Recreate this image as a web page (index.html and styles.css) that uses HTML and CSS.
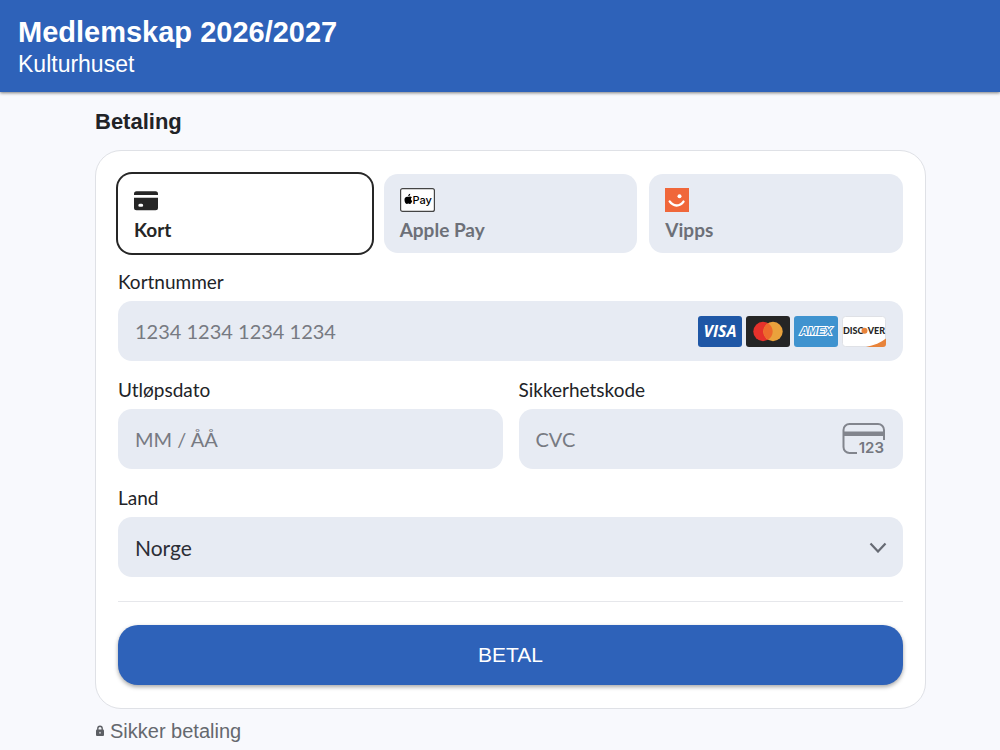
FILE: index.html
```html
<!DOCTYPE html>
<html lang="no">
<head>
  <meta charset="UTF-8">
  <meta name="viewport" content="width=device-width, initial-scale=1.0">
  <title>Medlemskap 2026/2027</title>
  <link rel="stylesheet" href="styles.css">
</head>
<body>
  <header class="topbar">
    <h1>Medlemskap 2026/2027</h1>
    <p>Kulturhuset</p>
  </header>

  <main class="checkout">
    <h2>Betaling</h2>

    <form class="card">
      <div class="methods">
        <button type="button" class="method selected" aria-pressed="true">
          <svg class="method-icon" width="24" height="24" viewBox="0 0 24 24" aria-hidden="true">
            <path fill="#262626" d="M2.500 3.300h19A2.500 2.500 0 0 1 24 5.800V7H0V5.800A2.500 2.500 0 0 1 2.500 3.300z"/>
            <path fill="#262626" fill-rule="evenodd" d="M0 9.800h24V19.700a2.500 2.500 0 0 1-2.500 2.500h-19A2.500 2.500 0 0 1 0 19.700zM5.800 15.700a1.500 1.500 0 0 0 0 3h1.900a1.500 1.500 0 0 0 0-3z"/>
          </svg>
          <span>Kort</span>
        </button>
        <button type="button" class="method" aria-pressed="false">
          <svg class="method-icon" width="35" height="24" viewBox="0 0 35 24" aria-hidden="true">
            <rect x="0.600" y="0.600" width="33.800" height="22.800" rx="2" fill="#fff" stroke="#444" stroke-width="1.200"/>
            <path d="M9 8.800c.8-.5 2.200-.5 2.900.5-1.500 1-1.200 3 .4 3.600-.6 1.600-1.500 3.100-2.500 3-.6-.1-.9-.4-1.500-.4s-.9.400-1.500.4C5.300 15.900 4.400 13.400 4.500 11.500c.1-2.200 1.900-3.200 3.300-2.700.5.200.8.200 1.200 0zM8.200 8.200c0-1.300.8-2.200 2-2.400.1 1.300-.8 2.400-2 2.400z"/>
            <text class="pay-text" x="12.500" y="15.500">Pay</text>
          </svg>
          <span>Apple Pay</span>
        </button>
        <button type="button" class="method" aria-pressed="false">
          <svg class="method-icon" width="24" height="24" viewBox="0 0 24 24" aria-hidden="true">
            <rect width="24" height="24" fill="#f0673a"/>
            <path d="M4.700 13.400c3.600 5.200 9.800 5.600 13.800.2" fill="none" stroke="#fff" stroke-width="2.400" stroke-linecap="round"/>
            <circle cx="14.500" cy="8.200" r="2" fill="#fff"/>
          </svg>
          <span>Vipps</span>
        </button>
      </div>

      <div class="field">
        <label for="number">Kortnummer</label>
        <div class="control">
          <input type="text" id="number" inputmode="numeric" placeholder="1234 1234 1234 1234">
          <div class="brands">
            <svg width="44" height="31" viewBox="0 0 44 31" role="img" aria-label="Visa">
              <rect width="44" height="31" rx="3" fill="#1f57a6"/>
              <text class="visa-text" x="22" y="21" text-anchor="middle">VISA</text>
            </svg>
            <svg width="44" height="31" viewBox="0 0 44 31" role="img" aria-label="Mastercard">
              <rect width="44" height="31" rx="3" fill="#252525"/>
              <circle cx="17" cy="15.500" r="9.700" fill="#e5312b"/>
              <circle cx="27" cy="15.500" r="9.700" fill="#eaa23c"/>
              <path d="M22 7.200a9.700 9.700 0 0 1 0 16.600 9.700 9.700 0 0 1 0-16.600z" fill="#ed6a2c"/>
            </svg>
            <svg width="44" height="31" viewBox="0 0 44 31" role="img" aria-label="American Express">
              <rect width="44" height="31" rx="3" fill="#3f93cf"/>
              <text class="amex-text" x="22" y="19" text-anchor="middle">AMEX</text>
            </svg>
            <svg width="44" height="31" viewBox="0 0 44 31" role="img" aria-label="Discover">
              <rect x="0.500" y="0.500" width="43" height="30" rx="3" fill="#fff" stroke="#dfe1e6"/>
              <path d="M24 31c8-1.500 15-4.500 20-8.500V28a3 3 0 0 1-3 3z" fill="#e8833a"/>
              <text class="discover-text" x="1" y="18">DISC</text>
              <text class="discover-text" x="43" y="18" text-anchor="end">VER</text>
              <circle cx="22.500" cy="14.800" r="3" fill="#e8833a"/>
            </svg>
          </div>
        </div>
      </div>

      <div class="row">
        <div class="field">
          <label for="expiry">Utløpsdato</label>
          <div class="control">
            <input type="text" id="expiry" inputmode="numeric" placeholder="MM / ÅÅ">
          </div>
        </div>
        <div class="field">
          <label for="cvc">Sikkerhetskode</label>
          <div class="control">
            <input type="text" id="cvc" inputmode="numeric" placeholder="CVC">
            <svg width="44" height="34" viewBox="0 0 44 34" aria-hidden="true">
              <path d="M15 31H7.500A6 6 0 0 1 1.500 25V8a6 6 0 0 1 6-6h28.500a6 6 0 0 1 6 6v10" fill="none" stroke="#82858d" stroke-width="2"/>
              <rect x="1.500" y="9.500" width="40.500" height="4.500" fill="#82858d"/>
              <text class="cvc-text" x="42" y="31" text-anchor="end">123</text>
            </svg>
          </div>
        </div>
      </div>

      <div class="field">
        <label for="country">Land</label>
        <div class="control">
          <select id="country">
            <option selected>Norge</option>
            <option>Sverige</option>
            <option>Danmark</option>
          </select>
          <svg class="chevron" width="18" height="12" viewBox="0 0 18 12" aria-hidden="true">
            <path d="M1.500 2.500L9 10.500l7.500-8" fill="none" stroke="#666a73" stroke-width="2.200"/>
          </svg>
        </div>
      </div>

      <hr>
      <button type="submit" class="pay">BETAL</button>
    </form>

    <p class="secure">
      <svg width="10" height="12" viewBox="0 0 10 12" aria-hidden="true">
        <path d="M2.800 5V3.500a2.200 2.200 0 0 1 4.400 0V5" fill="none" stroke="#5c5f64" stroke-width="1.400"/>
        <rect x="1" y="4.500" width="8" height="6.500" rx="1" fill="#5c5f64"/>
        <circle cx="5" cy="7.700" r="1" fill="#c4c6ca"/>
      </svg>
      Sikker betaling
    </p>
  </main>
</body>
</html>
```
FILE: styles.css
```css
* {
  box-sizing: border-box;
}
body {
  margin: 0;
  background-color: #f8f9fd;
  color: #212327;
  font-family: "Liberation Sans", Arial, sans-serif;
}
h1, h2, p {
  margin: 0;
}
.topbar {
  padding: 16px 18px 12px;
  background-color: #2e62b9;
  color: white;
  box-shadow: 0 1px 3px rgba(0, 0, 0, 0.5);
}
h1 {
  font-size: 29px;
  line-height: 32px;
}
.topbar p {
  font-size: 23px;
  line-height: 32px;
}
.checkout {
  padding: 16px 74px 0 95px;
}
h2 {
  margin-bottom: 14px;
  font-size: 22px;
  line-height: 28px;
}
.card {
  padding: 23px 22px;
  background-color: white;
  border: 1px solid #dfe1e6;
  border-radius: 26px;
  font-family: Lato, sans-serif;
}
.methods {
  display: grid;
  grid-template-columns: repeat(3, 1fr);
  gap: 12px;
  margin-bottom: 17px;
}
.method {
  display: flex;
  flex-direction: column;
  align-items: flex-start;
  gap: 6px;
  height: 79px;
  padding: 14px 16px 0;
  background-color: #e7ebf3;
  border: none;
  border-radius: 14px;
  color: #6d7078;
  font: bold 19px/24px Lato, sans-serif;
  cursor: pointer;
}
.method.selected {
  background-color: white;
  box-shadow: 0 0 0 2px #262626;
  color: #262626;
}
.method-icon {
  display: block;
}
.field {
  margin-bottom: 17px;
}
.row {
  display: grid;
  grid-template-columns: 1fr 1fr;
  gap: 16px;
}
label {
  display: block;
  margin-bottom: 7px;
  font-size: 19px;
  line-height: 24px;
}
.control {
  position: relative;
  display: flex;
  align-items: center;
  height: 60px;
  padding: 0 17px;
  background-color: #e7ebf3;
  border-radius: 14px;
}
input, select {
  flex: 1;
  min-width: 0;
  height: 60px;
  padding: 0;
  background: none;
  border: none;
  color: #2b2e36;
  font: 20px Lato, sans-serif;
}
input::placeholder {
  color: #777a82;
}
select {
  appearance: none;
  font-size: 21px;
}
.chevron {
  position: absolute;
  right: 16px;
  pointer-events: none;
}
.brands {
  display: flex;
  gap: 4px;
}
hr {
  height: 1px;
  margin: 24px 0 23px;
  background-color: #e6e7eb;
  border: none;
}
.pay {
  display: block;
  width: 100%;
  height: 60px;
  background-color: #2e62b9;
  border: none;
  border-radius: 20px;
  box-shadow: 0 2px 4px rgba(0, 0, 0, 0.35);
  color: white;
  font: 21px "Liberation Sans", Arial, sans-serif;
  cursor: pointer;
}
.secure {
  display: flex;
  align-items: center;
  gap: 5px;
  padding: 8px 0;
  color: #65686e;
  font-size: 20px;
  line-height: 28px;
}

/* Lettering inside the payment logos */
.pay-text {
  font: 500 11px Inter, sans-serif;
}
.visa-text {
  fill: white;
  font: italic bold 16px "Open Sans", sans-serif;
}
.amex-text {
  fill: #3f93cf;
  stroke: white;
  stroke-width: 2px;
  paint-order: stroke;
  font: italic bold 11px "Liberation Sans", Arial, sans-serif;
}
.discover-text {
  fill: #262626;
  font: 900 9px Lato, sans-serif;
}
.cvc-text {
  fill: #74777f;
  font: 600 15px Inter, sans-serif;
}
```
